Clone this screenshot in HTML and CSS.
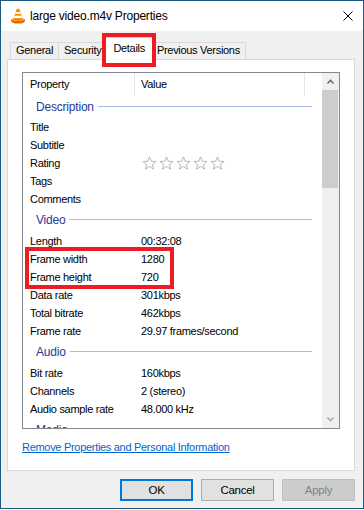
FILE: index.html
```html
<!DOCTYPE html>
<html lang="en">
<head>
<meta charset="utf-8">
<title>large video.m4v Properties</title>
<link rel="stylesheet" href="styles.css">
</head>
<body>
<div class="window">
  <div class="titlebar">
    <svg class="app-icon" width="16" height="16" viewBox="0 0 16 16">
      <path d="M1 12.2 Q1 15.6 8 15.6 Q15 15.6 15 12.2 Q15 11 13.2 10.6 L13.6 12 Q8 14.2 2.4 12 L2.8 10.6 Q1 11 1 12.2 Z" fill="#e06a00"/>
      <path d="M6.7 0.8 H9.3 L13.2 12.3 Q8 13.8 2.8 12.3 Z" fill="#ff8a00"/>
      <path d="M5.7 3.9 H10.3 L10.9 5.9 H5.1 Z" fill="#ffffff"/>
      <path d="M4.5 7.8 H11.5 L12.2 10 H3.8 Z" fill="#ffffff"/>
    </svg>
    <span class="title">large video.m4v Properties</span>
    <svg class="close" width="10" height="10" viewBox="0 0 10 10">
      <path d="M0.5 0.5 L9.5 9.5 M9.5 0.5 L0.5 9.5" stroke="#000" stroke-width="1" fill="none"/>
    </svg>
  </div>
  <div class="body">
    <div class="tabs">
      <div class="tab">General</div>
      <div class="tab">Security</div>
      <div class="tab tab-active">Details<span class="mark mark-tab"></span></div>
      <div class="tab">Previous Versions</div>
    </div>
    <div class="panel">
      <div class="list">
        <div class="list-main">
          <div class="list-head">
            <div class="head-col head-prop">Property</div>
            <div class="head-col head-val">Value</div>
          </div>
          <div class="group group-first"><span>Description</span></div>
          <div class="row"><span class="k">Title</span><span class="v"></span></div>
          <div class="row"><span class="k">Subtitle</span><span class="v"></span></div>
          <div class="row"><span class="k">Rating</span><span class="v stars">
            <svg class="star" width="15" height="14" viewBox="0 0 15 14"><path d="M7.5 0.8 L9.3 5.2 L14.1 5.5 L10.4 8.6 L11.6 13.2 L7.5 10.6 L3.4 13.2 L4.6 8.6 L0.9 5.5 L5.7 5.2 Z"/></svg>
            <svg class="star" width="15" height="14" viewBox="0 0 15 14"><path d="M7.5 0.8 L9.3 5.2 L14.1 5.5 L10.4 8.6 L11.6 13.2 L7.5 10.6 L3.4 13.2 L4.6 8.6 L0.9 5.5 L5.7 5.2 Z"/></svg>
            <svg class="star" width="15" height="14" viewBox="0 0 15 14"><path d="M7.5 0.8 L9.3 5.2 L14.1 5.5 L10.4 8.6 L11.6 13.2 L7.5 10.6 L3.4 13.2 L4.6 8.6 L0.9 5.5 L5.7 5.2 Z"/></svg>
            <svg class="star" width="15" height="14" viewBox="0 0 15 14"><path d="M7.5 0.8 L9.3 5.2 L14.1 5.5 L10.4 8.6 L11.6 13.2 L7.5 10.6 L3.4 13.2 L4.6 8.6 L0.9 5.5 L5.7 5.2 Z"/></svg>
            <svg class="star" width="15" height="14" viewBox="0 0 15 14"><path d="M7.5 0.8 L9.3 5.2 L14.1 5.5 L10.4 8.6 L11.6 13.2 L7.5 10.6 L3.4 13.2 L4.6 8.6 L0.9 5.5 L5.7 5.2 Z"/></svg>
          </span></div>
          <div class="row"><span class="k">Tags</span><span class="v"></span></div>
          <div class="row"><span class="k">Comments</span><span class="v"></span></div>
          <div class="group"><span>Video</span></div>
          <div class="row"><span class="k">Length</span><span class="v">00:32:08</span></div>
          <div class="highlight">
            <div class="row"><span class="k">Frame width</span><span class="v">1280</span></div>
            <div class="row"><span class="k">Frame height</span><span class="v">720</span></div>
            <span class="mark mark-rows"></span>
          </div>
          <div class="row"><span class="k">Data rate</span><span class="v">301kbps</span></div>
          <div class="row"><span class="k">Total bitrate</span><span class="v">462kbps</span></div>
          <div class="row"><span class="k">Frame rate</span><span class="v">29.97 frames/second</span></div>
          <div class="group"><span>Audio</span></div>
          <div class="row"><span class="k">Bit rate</span><span class="v">160kbps</span></div>
          <div class="row"><span class="k">Channels</span><span class="v">2 (stereo)</span></div>
          <div class="row"><span class="k">Audio sample rate</span><span class="v">48.000 kHz</span></div>
          <div class="group"><span>Media</span></div>
        </div>
        <div class="scrollbar">
          <div class="sb-btn">
            <svg width="7" height="5" viewBox="0 0 7 5"><path d="M0.5 4.5 L3.5 1.2 L6.5 4.5" stroke="#606060" stroke-width="1.4" fill="none"/></svg>
          </div>
          <div class="sb-track"><div class="sb-thumb"></div></div>
          <div class="sb-btn">
            <svg width="7" height="5" viewBox="0 0 7 5"><path d="M0.5 0.5 L3.5 3.8 L6.5 0.5" stroke="#a3a3a3" stroke-width="1.4" fill="none"/></svg>
          </div>
        </div>
      </div>
      <a class="link" href="#">Remove Properties and Personal Information</a>
    </div>
    <div class="buttons">
      <div class="btn btn-default">OK</div>
      <div class="btn">Cancel</div>
      <div class="btn btn-disabled">Apply</div>
    </div>
  </div>
</div>
</body>
</html>
```
FILE: styles.css
```css
html, body {
  margin: 0;
  padding: 0;
  background: #ffffff;
}

body {
  font-family: "Liberation Sans", Arial, sans-serif;
  font-size: 11px;
  letter-spacing: -0.3px;
  color: #000;
}

.window {
  width: 364px;
  height: 509px;
  box-sizing: border-box;
  border: 1px solid #1d5a7d;
  display: flex;
  flex-direction: column;
  overflow: hidden;
}

/* Title bar */
.titlebar {
  height: 30px;
  flex: none;
  background: #ffffff;
  display: flex;
  align-items: center;
  padding-left: 9px;
  padding-right: 10px;
}

.app-icon {
  flex: none;
  margin-top: -1px;
}

.title {
  margin-left: 4px;
  font-size: 12px;
  letter-spacing: -0.2px;
  flex: 1;
}

.close {
  flex: none;
}

/* Dialog body */
.body {
  flex: 1;
  background: #f0f0f0;
  padding: 0 8px 0 6px;
  display: flex;
  flex-direction: column;
}

.tabs {
  height: 29px;
  margin-bottom: -1px;
  padding-left: 3px;
  display: flex;
  align-items: flex-end;
}

.tab {
  height: 18px;
  box-sizing: border-box;
  border: 1px solid #d9d9d9;
  border-bottom: none;
  background: #f0f0f0;
  padding: 0 5px;
  line-height: 15px;
  margin-left: -1px;
  white-space: nowrap;
}

.tab:first-child {
  margin-left: 0;
}

.tab-active {
  position: relative;
  z-index: 2;
  height: 23px;
  line-height: 20px;
  background: #ffffff;
  padding: 0 7px 0 7px;
  margin-left: -2px;
  margin-right: -2px;
}

.tab-active + .tab {
  margin-left: 0;
}

.mark {
  position: absolute;
  box-sizing: border-box;
  border: 4px solid #ed1c24;
  z-index: 3;
  pointer-events: none;
}

.mark-tab {
  left: -4px;
  right: -4px;
  top: -5px;
  height: 34px;
}

/* Panel */
.panel {
  height: 412px;
  flex: none;
  box-sizing: border-box;
  background: #ffffff;
  border: 1px solid #d9d9d9;
  padding: 12px 14px 0 14px;
}

.list {
  height: 357px;
  box-sizing: border-box;
  border: 1px solid #828790;
  display: flex;
}

.list-main {
  flex: 1;
  overflow: hidden;
  position: relative;
}

.list-head {
  height: 23px;
  display: flex;
  line-height: 23px;
}

.head-col {
  box-sizing: border-box;
  border-right: 1px solid #e5e5e5;
}

.head-prop {
  width: 112px;
  padding-left: 7px;
}

.head-val {
  width: 170px;
  padding-left: 6px;
}

.group {
  height: 24px;
  display: flex;
  align-items: center;
  padding: 0 10px 0 13px;
  color: #1e3a9c;
  font-size: 12px;
  letter-spacing: -0.2px;
}

.group-first {
  height: 22px;
}

.group::after {
  content: "";
  flex: 1;
  height: 1px;
  background: #aabde6;
  margin-left: 4px;
  margin-top: -1px;
}

.row {
  height: 18px;
  line-height: 18px;
  display: flex;
  white-space: nowrap;
}

.k {
  width: 111px;
  padding-left: 7px;
  box-sizing: border-box;
  flex: none;
}

.v {
  padding-left: 7px;
}

.stars {
  display: flex;
  align-items: center;
  gap: 2px;
  padding-left: 8px;
}

.star {
  display: block;
}

.star path {
  fill: #fbfbfb;
  stroke: #b8b8b8;
  stroke-width: 1;
  stroke-linejoin: miter;
}

.highlight {
  position: relative;
}

.mark-rows {
  left: 2px;
  width: 149px;
  top: -3px;
  bottom: -3px;
}

/* Scrollbar */
.scrollbar {
  width: 17px;
  flex: none;
  background: #f0f0f0;
  display: flex;
  flex-direction: column;
}

.sb-btn {
  height: 17px;
  flex: none;
  display: flex;
  align-items: center;
  justify-content: center;
}

.sb-track {
  flex: 1;
}

.sb-thumb {
  height: 98px;
  margin: 0 1px 0 0;
  background: #cdcdcd;
}

/* Link */
.link {
  display: block;
  margin-top: 11px;
  line-height: 14px;
  color: #0066cc;
  text-decoration: underline;
  width: max-content;
}

/* Buttons */
.buttons {
  display: flex;
  justify-content: flex-end;
  gap: 8px;
  margin-top: 8px;
}

.btn {
  width: 73px;
  height: 22px;
  box-sizing: border-box;
  border: 1px solid #adadad;
  background: #e1e1e1;
  display: flex;
  align-items: center;
  justify-content: center;
  font-size: 11.5px;
}

.btn-default {
  border: 2px solid #0078d7;
}

.btn-disabled {
  background: #cccccc;
  border-color: #bfbfbf;
  color: #838383;
}
```
